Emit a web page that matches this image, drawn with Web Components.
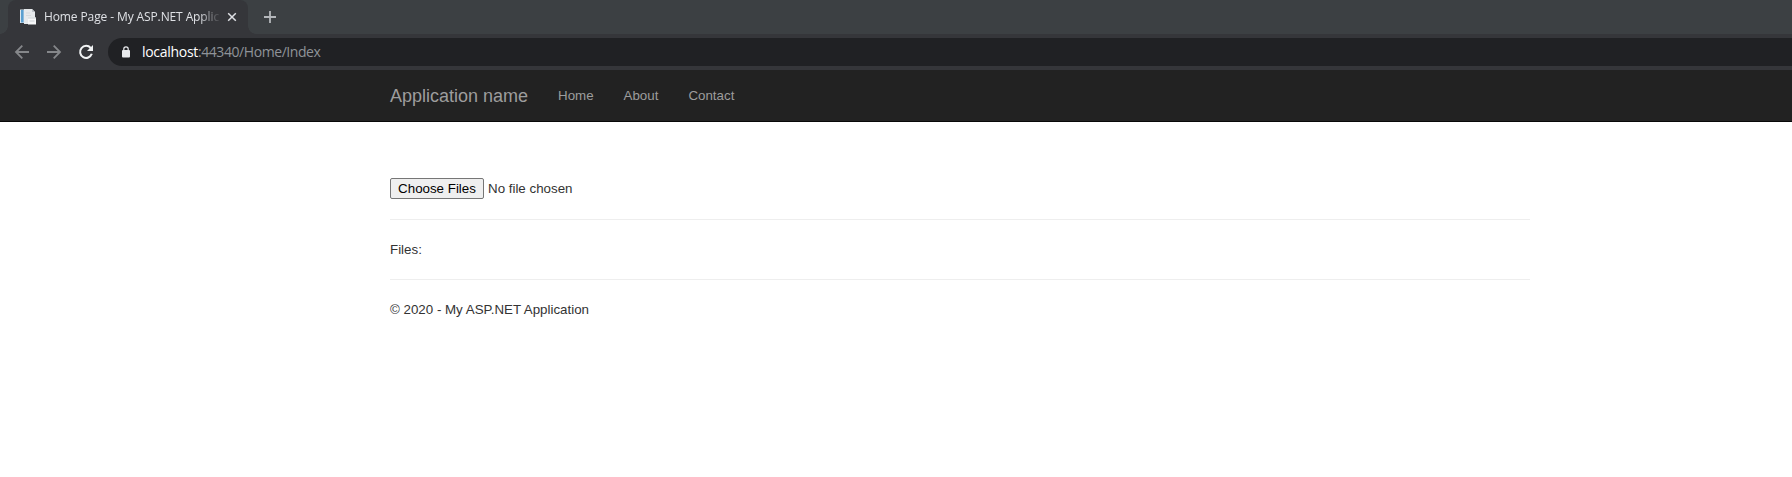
<!DOCTYPE html>
<html lang="en"><head><meta charset="utf-8"><title>Home Page - My ASP.NET Application</title>
<style>body{margin:0;background:#fff;overflow:hidden}</style></head><body>
<browser-tabs><browser-tab>Home Page - My ASP.NET Applic</browser-tab></browser-tabs>
<browser-toolbar><span slot="host">localhost</span><span slot="path">:44340/Home/Index</span></browser-toolbar>
<site-nav><span slot="brand">Application name</span><nav-link>Home</nav-link><nav-link>About</nav-link><nav-link>Contact</nav-link></site-nav>
<page-body><file-picker></file-picker><rule-line></rule-line><text-row>Files:</text-row><rule-line></rule-line><text-row>© 2020 - My ASP.NET Application</text-row></page-body>
<script>
const make=(name,html)=>customElements.define(name,class extends HTMLElement{
  constructor(){super();this.attachShadow({mode:'open'}).innerHTML=html;}
});
make('browser-tabs',`<style>:host{display:flex;height:34px;background:#3c4043;padding-left:8px}svg{display:block;margin:9px 0 0 15px}</style>
<slot></slot><svg width="14" height="16" viewBox="0 0 14 16"><path d="M7 2v12M1 8h12" stroke="#b4b7bb" stroke-width="1.8"/></svg>`);
make('browser-tab',`<style>:host{display:flex;align-items:center;box-sizing:border-box;width:240px;height:34px;padding-left:11px;background:#35363a;border-radius:8px 8px 0 0;position:relative;color:#dfe1e5;font:12px/34px "Open Sans","Noto Sans",sans-serif}
:host::before,:host::after{content:"";position:absolute;bottom:0;width:8px;height:8px}
:host::before{left:-8px;background:radial-gradient(circle at 0 0,transparent 7.5px,#35363a 8px)}
:host::after{right:-8px;background:radial-gradient(circle at 100% 0,transparent 7.5px,#35363a 8px)}
.t{width:177px;margin-left:7px;white-space:nowrap;overflow:hidden;letter-spacing:-.11px;-webkit-mask-image:linear-gradient(90deg,#000 155px,transparent 177px)}
svg{flex:none}.x{margin-left:6px}</style>
<svg width="18" height="18" viewBox="0 0 18 18"><path d="M1 1.5h5V15H1z" fill="#dbe6ee"/><path d="M2 2h2.6v12.5H2z" fill="#5a9fd0"/><path d="M5 1h8l3 3v12H5z" fill="#e6e9ec"/><path d="M13 1v3h3" fill="#bfc4ca"/><path d="M7 5h4M7 7.5h5" stroke="#d5d9dd"/><path d="M9 9.5h8v7H9z" fill="#f7f8f9"/><path d="M9 10h8M10.5 13h5" stroke="#cbd0d5"/></svg>
<div class="t"><slot></slot></div><svg class="x" width="10" height="10" viewBox="0 0 10 10"><path d="M1.2 1.2l7.6 7.6M8.8 1.2l-7.6 7.6" stroke="#dfe1e5" stroke-width="1.5"/></svg>`);
make('browser-toolbar',`<style>:host{display:flex;box-sizing:border-box;height:36px;background:#35363a;padding:4px 0 4px 14px;align-items:center}
.i{flex:none;margin-right:16px}.r{margin-right:14px}.o{display:flex;align-items:center;flex:1;height:28px;background:#202124;border-radius:14px 0 0 14px;padding-left:13px;box-sizing:border-box;font:14px/28px "Open Sans","Noto Sans",sans-serif;color:#9aa0a6}
.h{color:#fff;margin-left:11px;letter-spacing:-.3px}.p{letter-spacing:-.43px;color:#8f9398}</style>
<svg class="i" width="16" height="16" viewBox="0 0 16 16" fill="none" stroke="#85878a" stroke-width="1.8"><path d="M15 8H2.5M8.3 1.7L2 8l6.3 6.3"/></svg>
<svg class="i" width="16" height="16" viewBox="0 0 16 16" fill="none" stroke="#85878a" stroke-width="1.8"><path d="M1 8h12.500M7.700 1.700L14 8l-6.300 6.300"/></svg>
<svg class="i r" width="16" height="16" viewBox="0 0 16 16"><path d="M12.7 4A6 6 0 1 0 13.800 9.800" fill="none" stroke="#f1f3f4" stroke-width="2"/><path d="M15 1v6H9z" fill="#f1f3f4"/></svg>
<div class="o"><svg width="10" height="12" viewBox="0 0 10 12"><rect x="1" y="4" width="8" height="7.5" rx="1" fill="#e8eaed"/><path d="M2.8 5V3a2.2 2.2 0 0 1 4.4 0v2" fill="none" stroke="#e8eaed" stroke-width="1.2"/></svg><span class="h"><slot name="host"></slot></span><span class="p"><slot name="path"></slot></span></div>`);
make('site-nav',`<style>:host{display:flex;box-sizing:border-box;height:52px;background:#222;border-bottom:1px solid #080808;padding-left:390px;color:#9d9d9d;font:18px/51px "Liberation Sans",Arial,sans-serif}.b{width:153px;line-height:53px}</style><span class="b"><slot name="brand"></slot></span><slot></slot>`);
make('nav-link',`<style>:host{display:block;padding:0 15px;font-size:13.333px;line-height:51px}</style><slot></slot>`);
make('page-body',`<style>:host{display:block;width:1140px;margin-left:390px;padding-top:56px;color:#333;font:13.333px/20px "Liberation Sans",Arial,sans-serif}</style><slot></slot>`);
make('file-picker',`<style>:host{display:flex;height:21px}button{box-sizing:border-box;width:94px;height:21px;padding:0;border:1px solid #767676;border-radius:2px;background:#efefef;color:#000;font:13.333px/19px "Liberation Sans",Arial,sans-serif}span{margin-left:4px;line-height:21px}</style><button>Choose Files</button><span>No file chosen</span>`);
make('rule-line',`<style>:host{display:block;height:1px;background:#eee;margin:20px 0 19px}</style>`);
make('text-row',`<style>:host{display:block;height:20px;line-height:22px}</style><slot></slot>`);
</script></body></html>
